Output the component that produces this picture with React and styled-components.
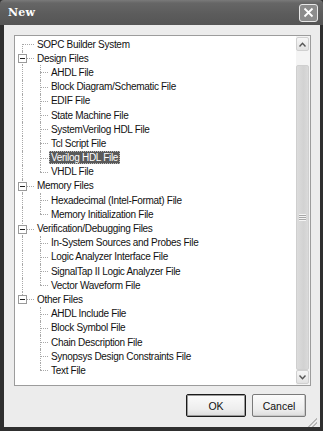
import React from 'react';
import styled, { createGlobalStyle } from 'styled-components';

const GlobalStyle = createGlobalStyle`
  html, body { margin: 0; padding: 0; background: #2e2e2e; }
  body { font-family: "Liberation Sans", Arial, sans-serif; }
`;

const tree = [
  { name: 'SOPC Builder System', children: [] },
  {
    name: 'Design Files',
    children: [
      'AHDL File',
      'Block Diagram/Schematic File',
      'EDIF File',
      'State Machine File',
      'SystemVerilog HDL File',
      'Tcl Script File',
      'Verilog HDL File',
      'VHDL File',
    ],
  },
  {
    name: 'Memory Files',
    children: ['Hexadecimal (Intel-Format) File', 'Memory Initialization File'],
  },
  {
    name: 'Verification/Debugging Files',
    children: [
      'In-System Sources and Probes File',
      'Logic Analyzer Interface File',
      'SignalTap II Logic Analyzer File',
      'Vector Waveform File',
    ],
  },
  {
    name: 'Other Files',
    children: [
      'AHDL Include File',
      'Block Symbol File',
      'Chain Description File',
      'Synopsys Design Constraints File',
      'Text File',
    ],
  },
];

const Window = styled.div`
  width: 323px;
  height: 431px;
  box-sizing: border-box;
  display: flex;
  flex-direction: column;
  background: #2f2f2f;
  padding: 0 3px 4px 4px;
`;

const TitleBar = styled.div`
  height: 25px;
  margin: 0 -3px 0 -4px;
  display: flex;
  align-items: center;
  justify-content: space-between;
  padding: 0 5px 0 8px;
  background: linear-gradient(#7a7a7a 0px, #666 3px, #5c5c5c 14px, #555 25px);
  border-radius: 4px 4px 0 0;
`;

const Title = styled.span`
  font-family: "DejaVu Serif", "Liberation Serif", serif;
  font-weight: bold;
  font-size: 11px;
  color: #fff;
  letter-spacing: 0.2px;
`;

const CloseButton = styled.div`
  width: 19px;
  height: 18px;
  box-sizing: border-box;
  border: 1px solid #e8e8e8;
  border-radius: 3px;
  background: #8c8c8c;
  display: flex;
  align-items: center;
  justify-content: center;
`;

const Body = styled.div`
  flex: 1;
  background: #ececec;
  display: flex;
  flex-direction: column;
  padding: 10px 9px 0 10px;
`;

const TreeBox = styled.div`
  height: 351px;
  box-sizing: border-box;
  border: 1px solid #9c9c9c;
  background: #fff;
  display: flex;
`;

const TreeList = styled.div`
  flex: 1;
  padding-top: 1px;
  overflow: hidden;
`;

const Row = styled.div`
  height: 14.2px;
  display: flex;
  align-items: stretch;
`;

const Guide = styled.span`
  position: relative;
  flex: none;
  width: ${(p) => p.$w}px;

  &::before {
    content: '';
    display: ${(p) => (p.$vert === 'none' ? 'none' : 'block')};
    position: absolute;
    left: ${(p) => p.$x}px;
    top: ${(p) => (p.$vert === 'bottom' ? '50%' : '0')};
    bottom: ${(p) => (p.$vert === 'top' ? '50%' : '0')};
    border-left: 1px dotted #a8a8a8;
  }

  &::after {
    content: '';
    display: ${(p) => (p.$horiz ? 'block' : 'none')};
    position: absolute;
    left: ${(p) => p.$x}px;
    right: 1px;
    top: 50%;
    border-top: 1px dotted #a8a8a8;
  }
`;

const Expander = styled.span`
  position: absolute;
  left: 3px;
  top: 50%;
  margin-top: -4px;
  width: 9px;
  height: 9px;
  box-sizing: border-box;
  border: 1px solid #9a9a9a;
  background: #fff;
  z-index: 1;

  &::before {
    content: '';
    position: absolute;
    left: 1px;
    right: 1px;
    top: 3px;
    border-top: 1px solid #222;
  }
`;

const Label = styled.span`
  align-self: center;
  padding: 0 2px;
  height: 13px;
  line-height: 13px;
  font-size: 10px;
  letter-spacing: -0.3px;
  white-space: nowrap;
  color: ${(p) => (p.$selected ? '#fff' : '#111')};
  background: ${(p) => (p.$selected ? '#5a5a5a' : 'transparent')};
  outline: ${(p) => (p.$selected ? '1px dotted #bbb' : 'none')};
  outline-offset: -1px;
`;

const ScrollBar = styled.div`
  width: 13px;
  flex: none;
  display: flex;
  flex-direction: column;
  background: #f4f4f4;
  padding: 1px 1px 1px 0;
`;

const ArrowButton = styled.div`
  height: 14px;
  box-sizing: border-box;
  border: 1px solid #d0d0d0;
  border-radius: 2px;
  background: linear-gradient(#f6f6f6, #e2e2e2);
  display: flex;
  align-items: center;
  justify-content: center;
`;

const Track = styled.div`
  flex: 1;
  display: flex;
  flex-direction: column;
  padding-top: 14px;
`;

const Thumb = styled.div`
  flex: 1;
  box-sizing: border-box;
  border: 1px solid #cfcfcf;
  border-radius: 2px;
  background: linear-gradient(90deg, #dcdcdc, #d2d2d2 60%, #dadada);
  display: flex;
  align-items: center;
  justify-content: center;
`;

const Grip = styled.span`
  width: 7px;
  height: 7px;
  background: repeating-linear-gradient(#f4f4f4 0 1px, #a8a8a8 1px 2px);
`;

const ButtonRow = styled.div`
  display: flex;
  justify-content: flex-end;
  gap: 6px;
  margin-top: 8px;
  padding-right: 5px;
  position: relative;
  flex: 1;
`;

const Button = styled.div`
  width: ${(p) => p.$w}px;
  height: 23px;
  box-sizing: border-box;
  border: 1px solid ${(p) => (p.$default ? '#1a1a1a' : '#7a7a7a')};
  border-radius: 2px;
  background: linear-gradient(#fbfbfb, #ededed 70%, #dcdcdc);
  box-shadow: ${(p) => (p.$default ? 'inset 0 0 0 1px #9a9a9a' : 'inset -1px -1px 0 #c8c8c8')};
  display: flex;
  align-items: center;
  justify-content: center;
  font-size: 10.5px;
  color: #111;
`;

const SizeGrip = styled.span`
  position: absolute;
  right: -6px;
  bottom: 0;
  width: 10px;
  height: 10px;
  background: linear-gradient(135deg, transparent 50%, #b8b8b8 50%, #b8b8b8 60%, transparent 60%, transparent 70%, #b8b8b8 70%, #b8b8b8 80%, transparent 80%);
`;

function TopRow({ item, index, count }) {
  const isFirst = index === 0;
  const isLast = index === count - 1;
  const vert = isFirst ? 'bottom' : isLast ? 'top' : 'full';
  return (
    <Row>
      <Guide $w={20} $x={7} $vert={vert} $horiz>
        {item.children.length > 0 && <Expander />}
      </Guide>
      <Label>{item.name}</Label>
    </Row>
  );
}

function ChildRow({ name, parentLast, last, selected }) {
  return (
    <Row>
      <Guide $w={20} $x={7} $vert={parentLast ? 'none' : 'full'} />
      <Guide $w={14} $x={5} $vert={last ? 'top' : 'full'} $horiz />
      <Label $selected={selected}>{name}</Label>
    </Row>
  );
}

export default function App() {
  const rows = [];
  tree.forEach((item, i) => {
    rows.push(<TopRow key={item.name} item={item} index={i} count={tree.length} />);
    item.children.forEach((c, j) => {
      rows.push(
        <ChildRow
          key={item.name + c}
          name={c}
          parentLast={i === tree.length - 1}
          last={j === item.children.length - 1}
          selected={c === 'Verilog HDL File'}
        />
      );
    });
  });

  return (
    <>
      <GlobalStyle />
      <Window>
        <TitleBar>
          <Title>New</Title>
          <CloseButton>
            <svg width="11" height="11" viewBox="0 0 11 11">
              <path d="M1.5 1.5 L9.5 9.5 M9.5 1.5 L1.5 9.5" stroke="#fff" strokeWidth="1.8" />
            </svg>
          </CloseButton>
        </TitleBar>
        <Body>
          <TreeBox>
            <TreeList>{rows}</TreeList>
            <ScrollBar>
              <ArrowButton>
                <svg width="7" height="5" viewBox="0 0 7 5">
                  <path d="M0.5 4.5 L3.5 1.2 L6.5 4.5" fill="none" stroke="#555" strokeWidth="1.4" />
                </svg>
              </ArrowButton>
              <Track>
                <Thumb>
                  <Grip />
                </Thumb>
              </Track>
              <ArrowButton>
                <svg width="7" height="5" viewBox="0 0 7 5">
                  <path d="M0.5 0.5 L3.5 3.8 L6.5 0.5" fill="none" stroke="#555" strokeWidth="1.4" />
                </svg>
              </ArrowButton>
            </ScrollBar>
          </TreeBox>
          <ButtonRow>
            <Button $w={60} $default>OK</Button>
            <Button $w={54}>Cancel</Button>
            <SizeGrip />
          </ButtonRow>
        </Body>
      </Window>
    </>
  );
}
